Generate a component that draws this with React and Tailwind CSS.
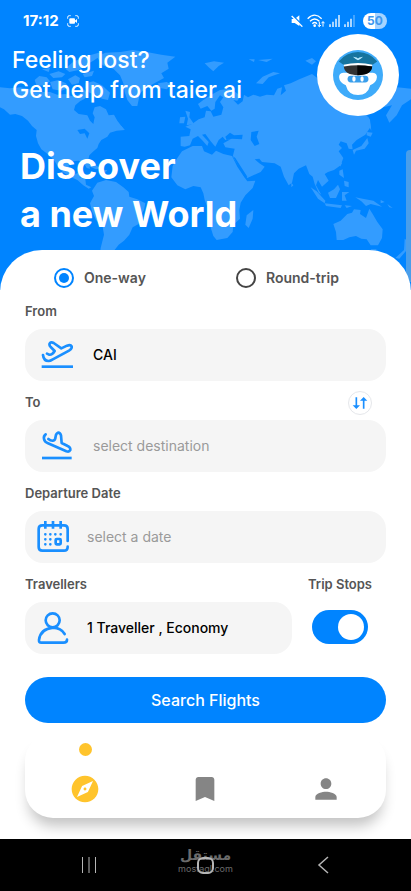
import { useState } from 'react'
import { MdBookmark, MdExplore, MdPerson } from 'react-icons/md'

function WorldMap() {
  return (
    <svg
      className="absolute inset-0 h-full w-full"
      viewBox="0 0 1233 870"
      preserveAspectRatio="xMidYMin slice"
      aria-hidden="true"
    >
      <g fill="#339cff">
        {/* North America */}
        <path d="M0 262 30 265 62 262 90 268 118 276 150 276 172 284 196 282 214 288 236 284 252 268 262 282 254 296 240 304 226 316 222 330 236 342 262 346 270 362 280 372 284 352 278 340 284 322 300 318 318 328 326 346 342 344 352 362 364 378 374 390 350 392 330 398 322 410 304 420 296 432 292 444 278 456 268 466 264 484 270 506 260 504 252 488 236 482 218 484 206 494 206 514 216 524 232 520 240 512 246 522 238 532 256 538 258 554 274 562 266 566 250 556 232 540 206 528 188 516 174 500 164 484 152 470 138 458 124 448 114 430 108 408 110 390 96 378 84 362 66 348 46 342 30 344 12 328 0 322Z" />
        <path d="M104 240 118 228 140 232 150 244 136 256 110 258ZM150 246 176 240 198 250 206 264 184 272 158 268ZM148 222 176 214 196 222 186 232 160 234ZM204 238 226 226 240 234 236 250 216 254ZM196 206 216 188 248 172 296 158 310 162 280 182 256 196 236 210 208 216ZM256 250 280 244 306 256 330 278 324 300 306 296 288 284 268 278 256 264ZM126 208 150 204 146 216ZM248 222 282 212 276 228 254 232Z" />
        <path d="M254 496 276 492 304 504 288 508 270 500ZM306 510 322 510 316 518ZM346 378 364 378 374 390 356 390Z" />
        {/* Greenland, Iceland */}
        <path d="M290 170 316 158 362 156 398 150 440 156 484 164 526 170 502 188 506 206 484 220 492 234 466 248 434 266 420 280 412 318 396 318 382 300 374 276 370 250 360 226 340 206 308 196ZM474 250 500 246 516 254 500 268 480 264Z" />
        {/* South America */}
        <path d="M276 572 292 548 318 540 348 546 370 562 386 576 388 590 412 598 436 610 432 630 420 650 416 672 398 682 388 704 372 722 356 734 342 752 338 780 298 780 302 744 312 704 308 680 288 660 276 634 270 610 282 588Z" />
        {/* Africa */}
        <path d="M546 454 578 438 606 438 612 454 636 464 648 452 670 462 696 468 712 500 732 530 742 544 766 542 758 564 736 586 722 608 718 630 720 656 700 674 698 696 682 714 650 720 640 708 630 676 624 656 626 630 614 600 610 580 602 562 580 558 556 568 532 556 514 532 518 498 532 474Z" />
        <path d="M740 646 760 630 758 656 746 684 736 674Z" />
        {/* Europe and Asia */}
        <path d="M542 438 542 410 568 408 572 388 556 380 576 372 596 358 614 352 618 332 632 334 640 350 664 344 670 322 660 306 670 292 660 286 646 306 644 326 634 332 622 318 602 326 594 312 610 300 634 284 660 270 690 266 706 276 722 288 712 302 700 300 714 314 728 304 732 284 744 292 760 284 780 290 800 284 822 286 832 266 846 262 842 286 858 272 852 256 872 250 898 238 936 222 960 240 990 250 1060 250 1130 258 1192 262 1233 266 1233 298 1206 316 1190 346 1168 368 1158 346 1176 316 1150 322 1120 330 1094 340 1108 356 1112 380 1096 404 1070 420 1056 434 1058 448 1046 446 1040 430 1022 424 1016 434 1026 444 1016 454 1030 474 1022 496 1002 510 984 516 974 522 986 542 966 560 954 540 948 556 964 584 956 578 944 552 938 530 928 522 918 496 896 506 882 520 876 548 866 556 852 530 842 500 824 490 786 486 778 476 764 478 778 490 794 500 782 516 742 534 722 506 698 470 704 446 676 442 670 430 692 418 676 420 668 410 656 420 646 440 632 424 616 402 606 404 626 426 622 438 606 420 594 408 578 416 570 436 554 440Z" />
        <path d="M556 332 570 336 568 352 582 372 560 376 564 356ZM540 352 556 350 552 370 538 370ZM768 250 788 230 820 216 840 220 806 232 788 252ZM614 190 642 184 672 188 656 198 640 214 626 202ZM746 178 764 178 762 186ZM774 180 818 176 800 186ZM916 182 936 174 948 184 936 194Z" />
        {/* Japan */}
        <path d="M1100 396 1118 398 1112 410 1100 406ZM1102 414 1106 430 1094 446 1068 452 1062 464 1058 450 1084 438ZM1102 346 1110 360 1114 392 1106 376Z" />
        {/* South East Asia */}
        <path d="M932 562 950 574 976 602 974 610 954 596ZM974 610 1026 616 1022 624 978 618ZM984 578 1002 568 1014 554 1020 568 1008 594 990 594ZM1026 576 1048 576 1034 586 1040 602 1026 602ZM1018 512 1028 508 1032 534 1018 524ZM1032 542 1046 546 1046 562 1034 558ZM1034 616 1056 618 1040 624ZM1066 592 1088 596 1120 602 1146 620 1112 612 1098 618 1084 604ZM1142 600 1154 606 1142 610ZM1162 612 1178 624 1168 622ZM874 548 880 556 874 562ZM1020 482 1026 490 1020 500Z" />
        {/* Australia, New Zealand */}
        <path d="M1000 672 1022 662 1042 642 1056 638 1062 628 1082 630 1080 642 1098 654 1108 626 1118 642 1132 666 1148 688 1146 714 1134 736 1112 736 1100 718 1084 716 1068 708 1048 712 1030 720 1010 720 1008 696ZM1112 748 1130 748 1122 760ZM1214 716 1230 728 1224 746 1198 776 1186 774 1212 750Z" />
      </g>
      {/* Black Sea, Caspian Sea, Red Sea and the Great Lakes */}
      <g fill="#0084ff">
        <path d="M676 410 690 398 702 406 728 404 726 418 696 416 680 420ZM754 396 776 392 770 410 778 432 764 438 752 420ZM698 468 706 474 742 530 734 532ZM232 390 254 386 268 400 262 416 254 400 240 402Z" />
      </g>
    </svg>
  )
}

function StatusBar() {
  return (
    <div className="relative flex h-[34px] items-center justify-between pt-2 pr-6 pl-[23px] text-white">
      <div className="flex items-center gap-2">
        <span className="text-[15px] font-bold">17:12</span>
        <svg className="size-3" viewBox="0 0 36 36" fill="none" stroke="currentColor" strokeWidth="3">
          <path d="M2 11V7q0-5 5-5h4M25 2h4q5 0 5 5v4M34 25v4q0 5-5 5h-4M11 34H7q-5 0-5-5v-4" />
          <rect x="7" y="10" width="17" height="16" rx="3" fill="currentColor" stroke="none" />
          <path d="m23 17 7-5v12l-7-5z" fill="currentColor" stroke="none" />
        </svg>
      </div>
      <div className="flex items-center gap-1">
        <svg className="size-3" viewBox="0 0 36 36" fill="none" stroke="currentColor" strokeWidth="4">
          <path d="M2 12h9L25 1v32L11 24H2z" fill="currentColor" stroke="none" />
          <path d="m4 0 32 32" stroke="#0084ff" />
          <path d="m2 3 32 32" />
        </svg>
        <svg className="h-4 w-[18px]" viewBox="0 0 54 44" fill="none" stroke="currentColor" strokeWidth="4">
          <path d="M2 15Q23-6 44 15M9 23q14-14 28 0M16 30q7-7 14 0" />
          <circle cx="23" cy="36" r="4" fill="currentColor" stroke="none" />
          <path d="M37 24v15m-5-5 5 5 5-5M48 39V24m-5 5 5-5 5 5" strokeWidth="3" />
        </svg>
        <svg className="h-3 w-[11px]" viewBox="0 0 33 36" stroke="currentColor" strokeWidth="4">
          <path d="M3 28v8M12 20v16M21 11v25M30 0v36" />
        </svg>
        <svg className="h-3 w-[11px]" viewBox="0 0 33 36" stroke="currentColor" strokeWidth="4">
          <path d="M3 28v8M12 20v16M21 11v25" />
          <path d="M30 0v36" opacity=".4" />
        </svg>
        <span className="ml-1 flex h-4 w-6 items-center justify-center rounded-full bg-linear-to-r from-white from-50% to-[#a6d3ff] to-50% text-xs font-bold text-[#3d97ee]">
          50
        </span>
      </div>
    </div>
  )
}

function PilotIcon() {
  return (
    <svg className="size-[50px]" viewBox="384 151 148 148" aria-hidden="true">
      <circle cx="458" cy="225" r="74" fill="#3eabfa" />
      <path
        d="M402 232q-1-12 12-14h88q13 2 12 14-1 16-20 23-7 29-36 29t-36-29q-19-7-20-23z"
        fill="#fff"
      />
      <rect x="427" y="227" width="62" height="20" rx="10" fill="#3a9fec" />
      <ellipse cx="446" cy="237" rx="5" ry="8" fill="#fff" />
      <ellipse cx="470" cy="237" rx="5" ry="8" fill="#fff" />
      <path d="M415 190q43-10 86 0l-2 12h-82z" fill="#fff" />
      <path d="M401 185q22-27 57-28 35 1 57 28l-14 10q-43-11-86 0z" fill="#16749f" />
      <path d="M416 200q42-7 84 0-2 25-42 26-40-1-42-26z" fill="#333" />
      <path d="M456 197q22 0 44 3-2 25-44 26z" fill="#050505" />
      <path d="m443 171 11 2 4 3 4-3 11-2-8 7-7 3-7-3z" fill="#b9eaff" />
    </svg>
  )
}

function StrokeIcon({ viewBox, children }) {
  return (
    <svg
      className="size-8 shrink-0"
      viewBox={viewBox}
      fill="none"
      stroke="#1a8fff"
      strokeWidth="8"
      strokeLinecap="round"
      strokeLinejoin="round"
      aria-hidden="true"
    >
      {children}
    </svg>
  )
}

const takeoffIcon = (
  <StrokeIcon viewBox="124 254 96 96">
    <path d="M130 302q2 18 17 18 5 0 11-4l50-27q10-6 8-13-3-6-14-2l-17 8-23-16q-7-4-11 0-4 5 2 12l12 12q-8 13-17 11l-6-3" />
    <path d="M130 337h86" strokeLinecap="square" />
  </StrokeIcon>
)

const landingIcon = (
  <StrokeIcon viewBox="121 120 96 96">
    <path d="M135 133q-7 5-5 14 2 9 12 13l55 24q9 3 12-4 1-8-8-12l-18-9-2-23q-3-9-9-8-6 2-7 11-1 12-8 13-7 1-14-5" />
    <path d="M128 204h81" strokeLinecap="square" />
  </StrokeIcon>
)

const calendarIcon = (
  <StrokeIcon viewBox="113 393 96 96">
    <path d="M205 453v-36q0-11-11-11h-65q-11 0-11 11v54q0 11 11 11h65q11 0 11-12" />
    <path d="M138 397v15M161 397v15M184 397v15" strokeLinecap="square" />
    <path d="M138 433h0M153 433h0M168 433h0M184 433h0M138 448h0M153 448h0M138 463h0M153 463h0" />
    <rect x="169" y="447" width="15" height="16" rx="3" />
  </StrokeIcon>
)

const travellerIcon = (
  <StrokeIcon viewBox="113 138 96 96">
    <circle cx="160" cy="163" r="21" />
    <path d="M196 204q-11-18-35-19-38 4-42 37-1 8 7 8h66q11 0 11-9" />
  </StrokeIcon>
)

function Field({ id, icon, compact, ...props }) {
  return (
    <div
      className={`flex h-13 items-center rounded-[18px] bg-[#f5f5f5] pr-3 ${compact ? 'gap-4.5 pl-3' : 'gap-5 pl-4'}`}
    >
      {icon}
      <input
        id={id}
        type="text"
        className="w-full min-w-0 bg-transparent text-sm font-medium text-black outline-none placeholder:font-normal placeholder:text-[#9a9a9a]"
        {...props}
      />
    </div>
  )
}

function FieldLabel({ htmlFor, children }) {
  return (
    <label htmlFor={htmlFor} className="flex h-[39px] items-center pt-1 text-[13px] font-semibold text-[#555]">
      {children}
    </label>
  )
}

function TripRadio({ value, label, checked, onChange }) {
  return (
    <label className="flex h-6 items-center gap-2.5 text-sm font-semibold text-[#555]">
      <input
        type="radio"
        name="trip"
        value={value}
        checked={checked}
        onChange={onChange}
        className="flex size-5 appearance-none items-center justify-center rounded-full border-2 border-[#444] before:size-2.5 before:rounded-full checked:border-[#0084ff] checked:before:bg-[#0084ff]"
      />
      {label}
    </label>
  )
}

function App() {
  const [trip, setTrip] = useState('one-way')
  const [from, setFrom] = useState('CAI')
  const [to, setTo] = useState('')
  const [stops, setStops] = useState(true)

  const swap = () => {
    setFrom(to)
    setTo(from)
  }

  return (
    <div className="flex min-h-screen flex-col bg-white font-['Inter',sans-serif]">
      <header className="relative overflow-hidden bg-[#0084ff] pb-[52px] text-white">
        <WorldMap />
        <StatusBar />
        <div className="relative flex items-center justify-between pr-3 pl-3">
          <p className="text-[23px] leading-[30px] font-medium">
            Feeling lost?
            <br />
            Get help from taier ai
          </p>
          <button
            type="button"
            aria-label="taier ai"
            className="flex size-[82px] shrink-0 items-center justify-center rounded-full bg-white"
          >
            <PilotIcon />
          </button>
        </div>
        <h1 className="relative mt-[26px] pl-5 text-4xl leading-12 font-bold">
          Discover
          <br />
          a new World
        </h1>
        {/* scroll indicator */}
        <div className="absolute right-0 bottom-2 h-[132px] w-[5px] rounded-l-sm bg-[#4a9eea]" />
      </header>

      <main className="relative -mt-10 flex-1 rounded-t-[42px] bg-white px-[25px] pt-4">
        <div className="grid grid-cols-2 pl-[29px]">
          <TripRadio
            value="one-way"
            label="One-way"
            checked={trip === 'one-way'}
            onChange={() => setTrip('one-way')}
          />
          <div className="pl-4">
            <TripRadio
              value="round-trip"
              label="Round-trip"
              checked={trip === 'round-trip'}
              onChange={() => setTrip('round-trip')}
            />
          </div>
        </div>

        <FieldLabel htmlFor="from">From</FieldLabel>
        <Field id="from" icon={takeoffIcon} value={from} onChange={(e) => setFrom(e.target.value)} />

        <div className="flex items-center justify-between pr-3.5">
          <FieldLabel htmlFor="to">To</FieldLabel>
          <button
            type="button"
            onClick={swap}
            aria-label="Swap"
            className="mt-1 flex size-6 items-center justify-center rounded-full border border-gray-200 bg-white"
          >
            <svg className="size-4 shrink-0" viewBox="443 418 48 48" fill="none" stroke="#1a8fff" strokeWidth="5">
              <path d="M456 425v30M478 459v-29" />
              <path d="m445 449 11 11 11-11zM467 435l11-11 11 11z" fill="#1a8fff" stroke="none" />
            </svg>
          </button>
        </div>
        <Field
          id="to"
          icon={landingIcon}
          placeholder="select destination"
          value={to}
          onChange={(e) => setTo(e.target.value)}
        />

        <FieldLabel htmlFor="departure">Departure Date</FieldLabel>
        <Field id="departure" icon={calendarIcon} compact placeholder="select a date" />

        <div className="flex gap-4">
          <div className="flex-1">
            <FieldLabel htmlFor="travellers">Travellers</FieldLabel>
            <Field id="travellers" icon={travellerIcon} compact defaultValue="1 Traveller , Economy" />
          </div>
          <div className="flex w-[78px] flex-col">
            <FieldLabel htmlFor="stops">Trip Stops</FieldLabel>
            <input
              id="stops"
              type="checkbox"
              role="switch"
              checked={stops}
              onChange={() => setStops(!stops)}
              className="mt-2 ml-1 flex h-[34px] w-14 appearance-none items-center rounded-full bg-gray-300 px-1 before:size-[26px] before:rounded-full before:bg-white checked:justify-end checked:bg-[#0084ff]"
            />
          </div>
        </div>

        <button type="button" className="mt-[23px] h-[46px] w-full rounded-full bg-[#0084ff] text-base font-medium text-white">
          Search Flights
        </button>

        <nav className="mt-2.5 mb-5 grid h-[85px] grid-cols-3 rounded-[28px] bg-white pt-2.5 shadow-[0_12px_14px_-4px_rgba(0,0,0,0.24)]">
          <button type="button" aria-label="Explore" className="flex flex-col items-center gap-[17px]">
            <span className="size-[13px] rounded-full bg-[#ffc42c]" />
            <MdExplore className="size-8 text-[#ffc42c]" />
          </button>
          <button type="button" aria-label="Saved" className="flex flex-col items-center pt-[30px]">
            <MdBookmark className="size-8 text-[#858585]" />
          </button>
          <button type="button" aria-label="Profile" className="flex flex-col items-center pt-[30px]">
            <MdPerson className="size-8 text-[#858585]" />
          </button>
        </nav>
      </main>

      <footer className="relative grid h-13 grid-cols-3 items-center bg-black px-[30px] text-[#b5b5b5]">
        <button type="button" aria-label="Recent apps" className="flex justify-center">
          <svg className="size-4" viewBox="0 0 16 16" stroke="currentColor">
            <path d="M1.5 0v16M8 0v16M14.5 0v16" />
          </svg>
        </button>
        <button type="button" aria-label="Home" className="z-10 flex justify-center">
          <span className="size-[17px] rounded-md border-2 border-current" />
        </button>
        <button type="button" aria-label="Back" className="flex justify-center">
          <svg className="h-[18px] w-3" viewBox="0 0 12 18" fill="none" stroke="currentColor" strokeWidth="1.5">
            <path d="M11 1 2 9l9 8" />
          </svg>
        </button>
        <div className="pointer-events-none absolute inset-x-0 top-2 flex flex-col items-center text-[#6b6b6b]">
          <span dir="rtl" className="font-['DejaVu_Sans',sans-serif] text-sm leading-4 font-bold">
            مستقل
          </span>
          <span className="text-[9px] leading-3">mostaql.com</span>
        </div>
      </footer>
    </div>
  )
}

export default App
